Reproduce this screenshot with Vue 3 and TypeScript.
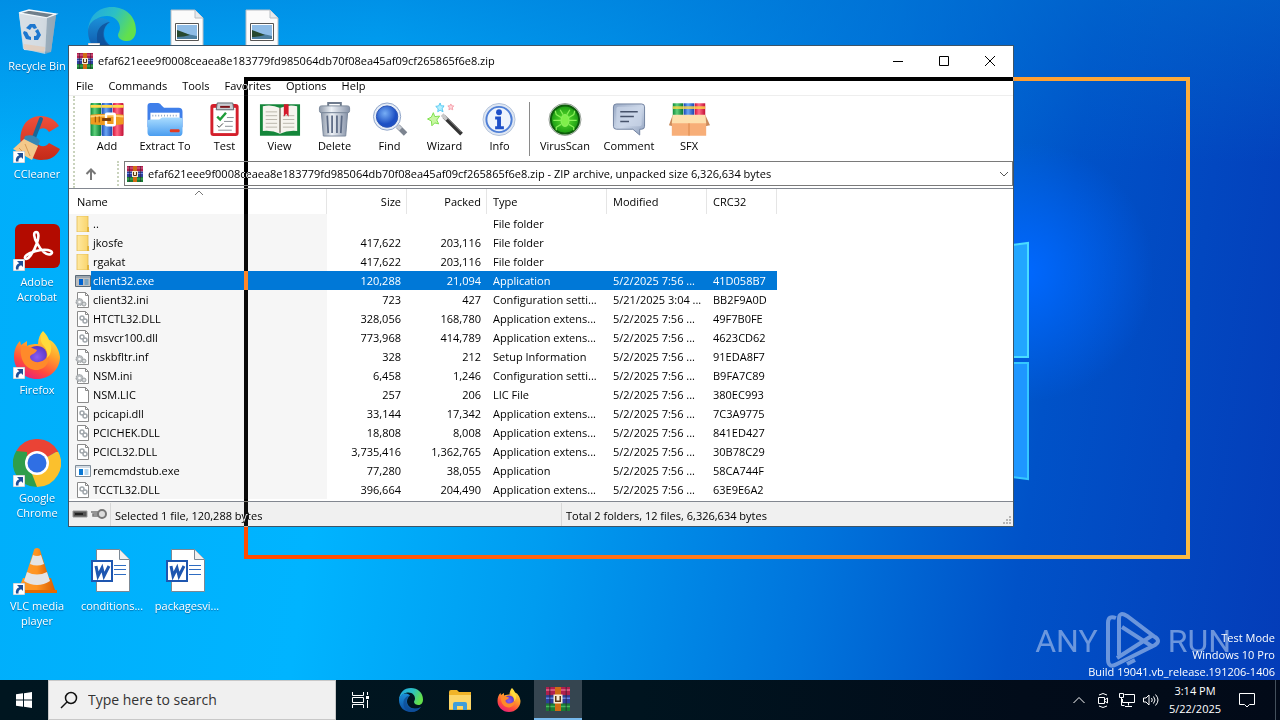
<script setup lang="ts">
interface DesktopItem {
  label: string
  icon: string
  col: number
  row: number
  shortcut?: boolean
}
interface Tool {
  label: string
  icon: string
  size: 'xs' | 'sm' | 'md' | 'lg'
}
interface Entry {
  name: string
  icon: string
  size: string
  packed: string
  type: string
  modified: string
  crc: string
  selected?: boolean
}

const archive = 'efaf621eee9f0008ceaea8e183779fd985064db70f08ea45af09cf265865f6e8.zip'

const desktopItems: DesktopItem[] = [
  { label: 'Recycle Bin', icon: 'bin', col: 1, row: 1 },
  { label: '', icon: 'edge', col: 2, row: 1, shortcut: true },
  { label: '', icon: 'image', col: 3, row: 1 },
  { label: '', icon: 'image', col: 4, row: 1 },
  { label: 'CCleaner', icon: 'ccleaner', col: 1, row: 2, shortcut: true },
  { label: 'Adobe Acrobat', icon: 'acrobat', col: 1, row: 3, shortcut: true },
  { label: 'Firefox', icon: 'firefox', col: 1, row: 4, shortcut: true },
  { label: 'Google Chrome', icon: 'chrome', col: 1, row: 5, shortcut: true },
  { label: 'VLC media player', icon: 'vlc', col: 1, row: 6, shortcut: true },
  { label: 'conditions...', icon: 'word', col: 2, row: 6 },
  { label: 'packagesvi...', icon: 'word', col: 3, row: 6 },
]

const menus = ['File', 'Commands', 'Tools', 'Favorites', 'Options', 'Help']

const mainTools: Tool[] = [
  { label: 'Add', icon: 'add', size: 'xs' },
  { label: 'Extract To', icon: 'extract', size: 'lg' },
  { label: 'Test', icon: 'test', size: 'sm' },
  { label: 'View', icon: 'view', size: 'sm' },
  { label: 'Delete', icon: 'delete', size: 'sm' },
  { label: 'Find', icon: 'find', size: 'sm' },
  { label: 'Wizard', icon: 'wizard', size: 'sm' },
  { label: 'Info', icon: 'info', size: 'sm' },
]
const extraTools: Tool[] = [
  { label: 'VirusScan', icon: 'virus', size: 'lg' },
  { label: 'Comment', icon: 'comment', size: 'lg' },
  { label: 'SFX', icon: 'sfx', size: 'md' },
]

const ext = 'Application extens...'
const conf = 'Configuration setti...'
const day = '5/2/2025 7:56 ...'
const entries: Entry[] = [
  { name: '..', icon: 'folder', size: '', packed: '', type: 'File folder', modified: '', crc: '' },
  { name: 'jkosfe', icon: 'folder', size: '417,622', packed: '203,116', type: 'File folder', modified: '', crc: '' },
  { name: 'rgakat', icon: 'folder', size: '417,622', packed: '203,116', type: 'File folder', modified: '', crc: '' },
  { name: 'client32.exe', icon: 'exe', size: '120,288', packed: '21,094', type: 'Application', modified: day, crc: '41D058B7', selected: true },
  { name: 'client32.ini', icon: 'ini', size: '723', packed: '427', type: conf, modified: '5/21/2025 3:04 ...', crc: 'BB2F9A0D' },
  { name: 'HTCTL32.DLL', icon: 'dll', size: '328,056', packed: '168,780', type: ext, modified: day, crc: '49F7B0FE' },
  { name: 'msvcr100.dll', icon: 'dll', size: '773,968', packed: '414,789', type: ext, modified: day, crc: '4623CD62' },
  { name: 'nskbfltr.inf', icon: 'ini', size: '328', packed: '212', type: 'Setup Information', modified: day, crc: '91EDA8F7' },
  { name: 'NSM.ini', icon: 'ini', size: '6,458', packed: '1,246', type: conf, modified: day, crc: 'B9FA7C89' },
  { name: 'NSM.LIC', icon: 'file', size: '257', packed: '206', type: 'LIC File', modified: day, crc: '380EC993' },
  { name: 'pcicapi.dll', icon: 'dll', size: '33,144', packed: '17,342', type: ext, modified: day, crc: '7C3A9775' },
  { name: 'PCICHEK.DLL', icon: 'dll', size: '18,808', packed: '8,008', type: ext, modified: day, crc: '841ED427' },
  { name: 'PCICL32.DLL', icon: 'dll', size: '3,735,416', packed: '1,362,765', type: ext, modified: day, crc: '30B78C29' },
  { name: 'remcmdstub.exe', icon: 'exe', size: '77,280', packed: '38,055', type: 'Application', modified: day, crc: '58CA744F' },
  { name: 'TCCTL32.DLL', icon: 'dll', size: '396,664', packed: '204,490', type: ext, modified: day, crc: '63E9E6A2' },
]
</script>

<template>
  <div class="screen">
    <svg class="sprite" aria-hidden="true">
      <defs>
        <linearGradient id="gGreen" x1="0" x2="1"><stop offset="0" stop-color="#0c8a3c" /><stop offset=".4" stop-color="#5fd07a" /><stop offset="1" stop-color="#07752f" /></linearGradient>
        <linearGradient id="gBlue" x1="0" x2="1"><stop offset="0" stop-color="#1a49b8" /><stop offset=".4" stop-color="#6aa6f4" /><stop offset="1" stop-color="#1a45ad" /></linearGradient>
        <linearGradient id="gRed" x1="0" x2="1"><stop offset="0" stop-color="#d4143c" /><stop offset=".4" stop-color="#ff6a86" /><stop offset="1" stop-color="#c20f35" /></linearGradient>
        <linearGradient id="gFolder" x1="0" y1="0" x2="0" y2="1"><stop offset="0" stop-color="#a9dcff" /><stop offset="1" stop-color="#4a9df0" /></linearGradient>
        <linearGradient id="gSteel" x1="0" x2="1"><stop offset="0" stop-color="#8f9aaa" /><stop offset=".4" stop-color="#eef2f7" /><stop offset="1" stop-color="#8793a8" /></linearGradient>
        <linearGradient id="gBubble" x1="0" y1="0" x2="1" y2="1"><stop offset="0" stop-color="#98a8c4" /><stop offset=".5" stop-color="#ced9ea" /><stop offset="1" stop-color="#8fa0bd" /></linearGradient>
        <radialGradient id="gLens" cx=".4" cy=".35"><stop offset="0" stop-color="#77aef5" /><stop offset="1" stop-color="#1d50c4" /></radialGradient>
        <radialGradient id="gVirus"><stop offset="0" stop-color="#5fe62e" /><stop offset="1" stop-color="#1a9a12" /></radialGradient>
        <linearGradient id="gEdgeA" x1="0" y1="0" x2="1" y2=".4"><stop offset="0" stop-color="#1fa6e4" /><stop offset=".55" stop-color="#2cc0c4" /><stop offset="1" stop-color="#62e04c" /></linearGradient>
        <linearGradient id="gEdgeB" x1="0" y1="0" x2="0" y2="1"><stop offset="0" stop-color="#1b8fd8" /><stop offset="1" stop-color="#0c4da2" /></linearGradient>
        <linearGradient id="gFox" x1=".8" y1="0" x2=".3" y2="1"><stop offset="0" stop-color="#fff04a" /><stop offset=".4" stop-color="#ffa42b" /><stop offset=".75" stop-color="#ff4a3e" /><stop offset="1" stop-color="#e8207a" /></linearGradient>
        <radialGradient id="gFoxBall"><stop offset="0" stop-color="#8a5cf0" /><stop offset="1" stop-color="#5a38c8" /></radialGradient>
        <linearGradient id="gCone" x1="0" x2="1"><stop offset="0" stop-color="#ff9a2a" /><stop offset=".5" stop-color="#ff9420" /><stop offset="1" stop-color="#d85c00" /></linearGradient>
        <linearGradient id="gBin" x1="0" x2="1"><stop offset="0" stop-color="#e4e9ee" /><stop offset=".6" stop-color="#c9d3dc" /><stop offset="1" stop-color="#93a5b5" /></linearGradient>
        <linearGradient id="gYellow" x1="0" x2="1"><stop offset="0" stop-color="#ffe9a2" /><stop offset="1" stop-color="#f9d367" /></linearGradient>
        <linearGradient id="gCc" x1="0" y1="0" x2="0" y2="1"><stop offset="0" stop-color="#f0503a" /><stop offset="1" stop-color="#c42a18" /></linearGradient>
      </defs>

      <symbol id="bin" viewBox="0 0 48 48">
        <path d="M6 7 43 8 38 45 11 43Z" fill="url(#gBin)" />
        <path d="M6 6 16 3 43 7 34 11Z" fill="#6f7f8b" stroke="#f3f7fa" stroke-width="1.4" />
        <path d="M34 11 43 8 38 45 32 47Z" fill="#94a7b7" opacity=".8" />
        <path d="M6 7 34 11 32 47 10 42Z" fill="#d6dde4" opacity=".8" />
        <path d="M11 37 32 40 31 46 11 42Z" fill="#e7c6ac" opacity=".6" />
        <path d="m13 21 4-4h5l2 4-3 1-2-2-2 3Zm12 1 3 6-3 5h-4l0-4 2 0 1-2-2-3Zm-7 11-5-1-3-6 1-2 3 1 2 4 2 1Z" fill="#1d77cf" />
      </symbol>
      <symbol id="edge" viewBox="0 0 48 48">
        <path d="M24 0C10 0 1 9 0 24c4-11 11-15 19-15 8 0 13 6 13 12 0 3-2 5-2 7 0 4 5 6 9 6 6 0 9-5 9-11C48 9 37 0 24 0Z" fill="url(#gEdgeA)" />
        <path d="M0 24c0 14 10 24 24 24 9 0 16-4 20-10-4 2-8 3-12 3-10 0-16-7-16-14 0-5 2-9 6-12-3-3-6-4-9-4C6 11 0 17 0 24Z" fill="url(#gEdgeB)" />
        <path d="M22 15c-8 4-9 17-2 23 7 7 18 5 24 0-4 6-11 10-20 10C13 46 8 38 9 29c0-7 5-13 13-14Z" fill="#0f4c94" opacity=".75" />
      </symbol>
      <symbol id="image" viewBox="0 0 48 48">
        <path d="M8 3h24l8 8v36H8Z" fill="#fbfbfb" stroke="#b9bec4" />
        <path d="M32 3v8h8" fill="#e6e9ec" stroke="#b9bec4" />
        <path d="M12.500 16.500h23v17h-23Z" fill="#fff" stroke="#555" />
        <path d="M14 18h20v14H14Z" fill="#8fbce6" />
        <path d="M14 25q7 1 20 4v3H14Z" fill="#4d7fa0" />
        <path d="M14 23q6 2 13 5-6 2-13 2Z" fill="#27482f" />
      </symbol>
      <symbol id="ccleaner" viewBox="0 0 48 48">
        <path d="M46 11C39-1 19-3 11 10 3 24 8 44 28 45c9 0 15-3 19-11l-11-6c-3 4-7 4-10 2-6-4-4-13 1-16 4-2 7 0 9 3Z" fill="url(#gCc)" />
        <path d="M28 4 19 28" stroke="#1a6796" stroke-width="4" stroke-linecap="round" />
        <path d="M12 21q9-3 15 5l-3 6-14-5Z" fill="#3687b5" />
        <path d="M11 24 25 31 19 45 0 34Z" fill="#f3c98b" />
        <path d="m6 33 5 5m1-9 5 12" stroke="#d79b56" />
      </symbol>
      <symbol id="acrobat" viewBox="0 0 48 48">
        <rect x="2" y="1" width="45" height="44" rx="6" fill="#b30b00" />
        <path d="M23 9c-3 0-2 6 1 11 4 8 10 13 14 11 3-2-1-5-10-4-8 1-17 5-16 8 2 4 9-6 12-15 2-6 2-11-1-11Z" fill="none" stroke="#fff" stroke-width="2.600" />
      </symbol>
      <symbol id="firefox" viewBox="0 0 48 48">
        <path d="M30 0c3 3 5 6 6 9 3 0 10 7 11 17 0 12-10 22-23 22S1 38 1 26c0-7 2-12 6-16l1 4 6-4 0 5c4-2 9-2 11-2 0-5 2-10 5-13Z" fill="url(#gFox)" />
        <circle cx="24" cy="26" r="11" fill="url(#gFoxBall)" />
        <path d="M8 15c6-1 10 2 16 4-1 4-7 4-7 7 1 5 8 7 14 3 3-2 4-6 1-10 6 4 6 17-7 20C14 40 6 30 8 15Z" fill="#ff8a2a" />
        <path d="M30 1c-3 5-3 10 1 14 3 4 4 8 3 12 5-4 6-13 1-19-3-3-4-5-5-7Z" fill="#ffdb3c" />
      </symbol>
      <symbol id="chrome" viewBox="0 0 48 48">
        <path d="M24 24 3.200 12A24 24 0 0 1 44.800 12Z" fill="#ea4335" />
        <path d="M24 24 44.800 12A24 24 0 0 1 24 48Z" fill="#fbc02d" />
        <path d="M24 24V48A24 24 0 0 1 3.200 12Z" fill="#2f9e4b" />
        <path d="M24 13H45.300L44.800 12 24 8Z" fill="#ea4335" />
        <path d="M14.500 29.500 3.200 12 14 13Z" fill="#2f9e4b" />
        <path d="M33.500 29.500 24 48l-5-13Z" fill="#fbc02d" />
        <circle cx="24" cy="24" r="12" fill="#fff" />
        <circle cx="24" cy="24" r="9.500" fill="#2f6fe4" />
      </symbol>
      <symbol id="vlc" viewBox="0 0 48 48">
        <path d="M10 31h28l5 15H4Z" fill="url(#gCone)" />
        <path d="M3 43h41v3H3Z" fill="#e66a00" />
        <path d="M24 1c2 0 3 1 3 2l10 31q-6 4-13 4t-13-4L21 3c0-1 1-2 3-2Z" fill="url(#gCone)" />
        <path d="m20 8-3 9q7 3 14 0l-3-9q-4 2-8 0Z" fill="#e4e4e4" />
        <path d="m14 25-3 9q6 4 13 4t13-4l-3-9q-10 5-20 0Z" fill="#e4e4e4" />
      </symbol>
      <symbol id="word" viewBox="2 0 48 48">
        <path d="M10.500 2.500h23l10 10v32h-33Z" fill="#fff" stroke="#7b8894" />
        <path d="M33.500 2.500v10h10" fill="#f0f0f0" stroke="#7b8894" />
        <path d="M28 18.500h12M28 22.500h12M28 27.500h12" stroke="#2e6cc2" />
        <rect x="6" y="14" width="20" height="20" fill="#fff" stroke="#1e56b0" stroke-width="2" />
        <path d="m10 19 2 10 4-8 2 8 5-10" fill="none" stroke="#1e56b0" stroke-width="3" />
      </symbol>
      <symbol id="shortcut" viewBox="0 0 12 12">
        <path d="M0 0h12v12H0Z" fill="#fff" stroke="#a9b3bd" />
        <path d="M4 2h6v6L8.200 6.200Q5 7 5.500 10.500H3Q2 6 6.200 4.200Z" fill="#1f4f96" />
      </symbol>

      <symbol id="books" viewBox="0 0 16 16">
        <path d="M0 0h16v5.500H0Z" fill="#b0204e" /><path d="M0 5.500h16V11H0Z" fill="#2c3f9c" /><path d="M0 11h16v5H0Z" fill="#1a7a34" />
        <path d="M0 1.500h16v1H0Z" fill="#e0688e" /><path d="M0 7h16v1H0Z" fill="#6a86e0" /><path d="M0 12.500h16v1H0Z" fill="#4ab860" />
        <path d="M2 0h1v16H2Zm11 0h1v16h-1Z" fill="#2a1c30" opacity=".5" />
        <path d="M6 0h4v16H6Z" fill="#d06c14" /><path d="M5 5h6v6H5Z" fill="#f8ecd4" /><path d="M6.500 6v3.500h3V6" fill="none" stroke="#5b3410" />
      </symbol>
      <symbol id="add" viewBox="0 0 36 36">
        <rect x="1" y="1" width="11" height="34" rx="1" fill="url(#gGreen)" /><rect x="12.500" y="1" width="11" height="34" rx="1" fill="url(#gBlue)" /><rect x="24" y="1" width="11" height="34" rx="1" fill="url(#gRed)" />
        <path d="M1 3h11v3H1Zm11.500 0h11v3h-11ZM24 3h11v3H24Z" fill="#ffd84a" />
        <path d="M1 13q17-2 34 0v10q-17 2-34 0Z" fill="#ef9a1e" /><path d="M1 14q17-2 34 0v2q-17-2-34 0Z" fill="#ffd27a" />
        <rect x="17" y="12" width="9" height="12" rx="1" fill="none" stroke="#fff" stroke-width="2.500" /><path d="M13 18h9" stroke="#7b3b06" stroke-width="3" />
        <path d="M6 15v6m4-6v6" stroke="#8d4a05" />
      </symbol>
      <symbol id="extract" viewBox="0 0 36 36">
        <path d="M0 4q0-3 3-3h8q2 0 4 3l2 2h15q4 0 4 4v16H0Z" fill="#3f7fea" />
        <path d="M3 11h30v10H3Z" fill="#fff" /><path d="M5 14h27" stroke="#8fa6c4" stroke-width="2" stroke-dasharray="1 2" />
        <path d="M0 20q0-2 3-2h9l3-2h17q4 0 4 2v13q0 4-4 4H4q-4 0-4-4Z" fill="url(#gFolder)" />
        <rect x="23" y="28" width="10" height="3" rx="1" fill="#e23a22" />
      </symbol>
      <symbol id="test" viewBox="0 0 36 36">
        <rect x="3" y="2" width="29" height="33" rx="3" fill="#d41f2b" /><path d="M6 6h23v26H6Z" fill="#fff" />
        <path d="M10 1h16l1 7H9Z" fill="#c9cdd2" stroke="#5f666d" /><path d="M13 5h10" stroke="#7a1218" stroke-width="2" />
        <path d="m10 15 3 3 6-7" fill="none" stroke="#1f9c3a" stroke-width="2.500" /><path d="m10 24 2 2 4-4" fill="none" stroke="#444" />
        <path d="M20 16h7M17 20h9M18 25h8M11 29h14" stroke="#8a9097" />
      </symbol>
      <symbol id="view" viewBox="0 0 44 36">
        <path d="M1 2h42v33H1Z" fill="#14863a" /><path d="M4 4q10-2 18 2 8-4 18-2v26q-10-1-18 3-8-4-18-3Z" fill="#f6f4ee" />
        <path d="M22 6v26" stroke="#9a9488" stroke-width="2" /><path d="M7 10h12M7 14h12M7 18h12M7 22h12M7 26h12M25 14h12M25 18h12M25 22h12M25 26h12" stroke="#b9b4aa" />
        <path d="M26 2h5v13l-2.500-3L26 15Z" fill="#d3182a" />
      </symbol>
      <symbol id="delete" viewBox="0 0 36 36">
        <path d="M11 4V1h13v3" fill="none" stroke="#6f7b8d" stroke-width="2" /><rect x="2" y="4" width="31" height="7" rx="2" fill="url(#gSteel)" stroke="#7d899b" />
        <path d="M4 11h27l-2 24H6Z" fill="url(#gSteel)" stroke="#7b889c" /><path d="m10 14 1 18m4-18v18m5-18v18m5-18-1 18" stroke="#5c6a84" stroke-width="1.800" />
      </symbol>
      <symbol id="find" viewBox="0 0 36 36">
        <path d="m26 25 8 8" stroke="#7c8490" stroke-width="5" /><path d="m25 24 4 4" stroke="#c7ccd4" stroke-width="4" />
        <circle cx="15" cy="15" r="14" fill="#e6edf7" stroke="#8ea4c8" /><circle cx="15" cy="15" r="11" fill="url(#gLens)" stroke="#2a54b4" />
      </symbol>
      <symbol id="wizard" viewBox="0 0 36 36">
        <path d="m17 15 18 18" stroke="#333" stroke-width="4" /><path d="m15 13 5 5" stroke="#c9c9c9" stroke-width="4" /><path d="m20 16 15 15" stroke="#8b8b8b" />
        <path d="m6 11 1.500 4 5-.5-3 4 2 4-4-1-3 3-.5-5-4-2 4-2Z" fill="#c9f7a4" stroke="#7fe04e" />
        <path d="m13 1 1 3h3l-2 3 1 3-3-1.500-2.500 1.500 .5-3-2.500-2.500 3-.5Z" fill="#b4f0ff" stroke="#57c8f2" /><path d="m24 2 1 2h2l-1.500 2 .5 2-2-1-2 1 .5-2L21 4h2Z" fill="#ffd7dc" stroke="#f5a0aa" />
      </symbol>
      <symbol id="info" viewBox="0 0 36 36">
        <circle cx="17" cy="18" r="16.500" fill="#dfe7f3" stroke="#b3c2da" /><circle cx="17" cy="18" r="13" fill="#eef4fc" stroke="#4f7fd6" stroke-width="2" />
        <circle cx="17" cy="10.500" r="3" fill="#1e50c8" /><path d="M13 15h6v10h3v3h-9v-3h2v-7h-2Z" fill="#1e50c8" />
      </symbol>
      <symbol id="virus" viewBox="0 0 36 36">
        <circle cx="18" cy="18" r="16.500" fill="#dfe3df" stroke="#9aa39a" /><circle cx="18" cy="18" r="14.500" fill="url(#gVirus)" stroke="#0e5c0c" stroke-width="2" />
        <g fill="none" stroke="#8af05a" stroke-width="1.300"><ellipse cx="18" cy="19" rx="4" ry="6" fill="#7ff04a" /><path d="m14 16-5-3-1-4m6 10H6m8 4-5 3v3m13-13 5-3 1-4m-6 10h8m-8 4 5 3v3M16 13l-3-5m7 5 3-5" /></g>
      </symbol>
      <symbol id="comment" viewBox="0 0 36 36">
        <path d="M5 2h26q3 0 3 3v20q0 3-3 3h-2l0 6-7-6H5q-3 0-3-3V5q0-3 3-3Z" fill="url(#gBubble)" stroke="#71819f" /><rect x="5" y="5" width="26" height="20" rx="2" fill="#cbd6e8" opacity=".7" />
        <path d="M9 10h18M9 15h14M9 20h9" stroke="#47536b" stroke-width="1.600" />
      </symbol>
      <symbol id="sfx" viewBox="0 0 44 36">
        <path d="M5 1h11v14H5Z" fill="url(#gGreen)" /><path d="M16.500 1h11v14h-11Z" fill="url(#gBlue)" /><path d="M28 1h11v14H28Z" fill="url(#gRed)" /><path d="M5 4h34v3H5Z" fill="#ffd84a" opacity=".8" />
        <path d="m5 13-4 11 4 1Zm34 0 5 11-5 1Z" fill="#c98a5a" /><path d="M4 20h36v15H4Z" fill="#f7ae78" /><path d="M5 13h34l1 9H4Z" fill="#fde0ae" /><path d="M22 22v13" stroke="#d98446" />
      </symbol>

      <symbol id="folder" viewBox="0 0 16 16"><path d="M2 0h11v13l1 3H2Z" fill="url(#gYellow)" stroke="#e3bb52" stroke-width=".8" /><path d="M12 11h2v5h-2Z" fill="#e2b53e" /></symbol>
      <symbol id="file" viewBox="0 0 16 16"><path d="M2.500.5h8l3 3v12h-11Z" fill="#fff" stroke="#8a8a8a" /><path d="M10.500.5v3h3" fill="none" stroke="#8a8a8a" /></symbol>
      <symbol id="dll" viewBox="0 0 16 16"><path d="M2.500.5h8l3 3v12h-11Z" fill="#fff" stroke="#8a8a8a" /><path d="M10.500.5v3h3" fill="none" stroke="#8a8a8a" /><circle cx="7" cy="7" r="2" fill="none" stroke="#a0a6ab" stroke-width="1.500" /><circle cx="10" cy="10" r="2" fill="none" stroke="#a0a6ab" stroke-width="1.500" /></symbol>
      <symbol id="ini" viewBox="0 0 16 16"><path d="M2.500.5h8l3 3v12h-11Z" fill="#fff" stroke="#8a8a8a" /><path d="M10.500.5v3h3" fill="none" stroke="#8a8a8a" /><circle cx="4.500" cy="10" r="3.500" fill="#b9bdc0" stroke="#9a9ea1" stroke-dasharray="2 1" /><circle cx="4.500" cy="10" r="1.300" fill="#fff" /><circle cx="9" cy="12" r="2" fill="#d5d8da" stroke="#9a9ea1" /></symbol>
      <symbol id="exe" viewBox="0 0 16 16"><path d="M.5 2.500h15v11H.5Z" fill="#fff" stroke="#7f8c99" /><path d="M1 3h14v2H1Z" fill="#d3dbe3" /><path d="M4 6h4v6H4Z" fill="#0a78d4" /><path d="M9.500 7h4m-4 2h4m-4 2h4" stroke="#6aaede" /></symbol>
      <symbol id="explorer" viewBox="0 0 24 24"><path d="M1 4q0-2 2-2h6l2 2h12v18H1Z" fill="#f0b429" /><path d="M1 7h22v14H1Z" fill="#fcd669" /><path d="M5 22v-6q0-2 2-2h10q2 0 2 2v6h-4v-4H9v4Z" fill="#3f9ddb" /></symbol>
    </svg>

    <main class="desktop">
      <svg class="wall-logo" viewBox="0 0 260 240" aria-hidden="true">
        <path d="M120 18 248 2V116H120Z" fill="#22a6ff" stroke="#4adcff" stroke-width="2" />
        <path d="M120 122H248V238L120 222Z" fill="#1e97ff" stroke="#35c8ff" stroke-width="2" />
      </svg>
      <nav class="icons" aria-label="Desktop">
        <button
          v-for="(item, i) in desktopItems"
          :key="i"
          class="shortcut"
          type="button"
          :aria-label="item.label || item.icon"
          :style="{ gridColumn: item.col, gridRow: item.row }"
        >
          <span class="art">
            <svg class="big"><use :href="'#' + item.icon" /></svg>
            <svg v-if="item.shortcut" class="arrow"><use href="#shortcut" /></svg>
          </span>
          <span v-if="item.label" class="caption">{{ item.label }}</span>
        </button>
      </nav>

      <section class="window">
        <header class="titlebar">
          <svg class="i16"><use href="#books" /></svg>
          <h1>{{ archive }}</h1>
          <button type="button" aria-label="Minimize"><svg viewBox="0 0 12 12"><path d="M1 6.500h10" /></svg></button>
          <button type="button" aria-label="Maximize"><svg viewBox="0 0 12 12"><path d="M1.500 1.500h9v9h-9Z" /></svg></button>
          <button type="button" aria-label="Close"><svg viewBox="0 0 12 12"><path d="m1 1 10 10M11 1 1 11" /></svg></button>
        </header>
        <nav class="menubar">
          <button v-for="m in menus" :key="m" type="button">{{ m }}</button>
        </nav>
        <div class="bars">
          <div class="toolbar">
            <button v-for="t in mainTools" :key="t.label" type="button" :class="['tool', t.size]">
              <svg><use :href="'#' + t.icon" /></svg>
              <span>{{ t.label }}</span>
            </button>
            <span class="divider"></span>
            <button v-for="t in extraTools" :key="t.label" type="button" :class="['tool', t.size]">
              <svg><use :href="'#' + t.icon" /></svg>
              <span>{{ t.label }}</span>
            </button>
          </div>
          <div class="address">
            <button class="up" type="button" aria-label="Up one level">
              <svg viewBox="0 0 12 12"><path d="M6 12V1.500M1.500 6 6 1.500 10.500 6" /></svg>
            </button>
            <button class="path" type="button">
              <svg class="i16"><use href="#books" /></svg>
              <span>{{ archive }} - ZIP archive, unpacked size 6,326,634 bytes</span>
              <svg class="chev" viewBox="0 0 10 10"><path d="m1 3 4 4 4-4" /></svg>
            </button>
          </div>
        </div>
        <div class="list">
          <table>
            <colgroup>
              <col class="c-name" /><col class="c-num" /><col class="c-num" /><col class="c-type" /><col class="c-mod" /><col class="c-crc" />
            </colgroup>
            <thead>
              <tr>
                <th class="name">
                  Name
                  <svg class="sort" viewBox="0 0 10 6"><path d="m1 5 4-4 4 4" /></svg>
                </th>
                <th class="num">Size</th>
                <th class="num">Packed</th>
                <th>Type</th>
                <th>Modified</th>
                <th>CRC32</th>
              </tr>
            </thead>
            <tbody>
              <tr v-for="e in entries" :key="e.name" :class="{ selected: e.selected }">
                <td class="name">
                  <div class="cell">
                    <svg class="i16"><use :href="'#' + e.icon" /></svg>
                    <span>{{ e.name }}</span>
                  </div>
                </td>
                <td class="num">{{ e.size }}</td>
                <td class="num">{{ e.packed }}</td>
                <td>{{ e.type }}</td>
                <td>{{ e.modified }}</td>
                <td>{{ e.crc }}</td>
              </tr>
            </tbody>
          </table>
        </div>
        <footer class="status">
          <span class="lights">
            <svg viewBox="0 0 36 12">
              <path d="M1 3h14v6H1Z" fill="#555" stroke="#999" /><path d="M3 6h8" stroke="#222" stroke-width="2" />
              <path d="M19 4h8v2h-6v2h6" fill="none" stroke="#777" stroke-width="1.500" /><circle cx="30" cy="6" r="4" fill="#ddd" stroke="#777" stroke-width="2" />
            </svg>
          </span>
          <span class="part">Selected 1 file, 120,288 bytes</span>
          <span class="part total">Total 2 folders, 12 files, 6,326,634 bytes</span>
          <svg class="grip" viewBox="0 0 9 9"><path d="M6 0h2v2H6ZM3 3h2v2H3Zm3 0h2v2H6ZM0 6h2v2H0Zm3 0h2v2H3Zm3 0h2v2H6Z" /></svg>
        </footer>
      </section>

      <div class="drag-frame"></div>

      <div class="brand" aria-hidden="true">
        <span>ANY</span>
        <svg viewBox="0 0 56 60">
          <path d="M11 7Q3 4 3 12v36q0 10 9 5L50 34q6-4 0-8L22 5q-8-5-8 3v36" />
          <path d="M17 16 48 36M12 47 48 24M22 53 30 49" />
        </svg>
        <span>RUN</span>
      </div>
      <p class="build">
        Test Mode<br />Windows 10 Pro<br />Build 19041.vb_release.191206-1406
      </p>
    </main>

    <footer class="taskbar">
      <button class="start" type="button" aria-label="Start">
        <svg viewBox="0 0 16 16"><path d="M0 2.300 7 1.300V7.500H0ZM8 1.200 16 0V7.500H8ZM0 8.500H7V14.700L0 13.700ZM8 8.500H16V16L8 14.800Z" fill="#fff" /></svg>
      </button>
      <label class="search">
        <svg viewBox="0 0 18 18"><circle cx="11" cy="7" r="5.500" /><path d="M7 11 1 17" /></svg>
        <input type="text" aria-label="Search" placeholder="Type here to search" />
      </label>
      <button class="task view" type="button" aria-label="Task View">
        <svg class="line" viewBox="0 0 18 18"><path d="M1.500 1v3.500h11V1M1.500 17v-3.500h11V17M1.500 6.500h11v5h-11ZM16.500 1v3M16.500 9v8" /><path d="M15 5h3v3h-3Z" fill="#fff" stroke="none" /></svg>
      </button>
      <button class="task" type="button" aria-label="Edge"><svg><use href="#edge" /></svg></button>
      <button class="task" type="button" aria-label="File Explorer"><svg><use href="#explorer" /></svg></button>
      <button class="task" type="button" aria-label="Firefox"><svg><use href="#firefox" /></svg></button>
      <button class="task active" type="button" aria-label="WinRAR"><svg><use href="#books" /></svg></button>
      <div class="tray">
        <button type="button" aria-label="Show hidden icons"><svg viewBox="0 0 16 16"><path d="m2.500 11 5.500-5.500L13.500 11" /></svg></button>
        <button type="button" aria-label="Meet Now"><svg viewBox="0 0 16 16"><path d="M3.500 5.500h6v6h-6ZM9.500 8l3-2v5l-3-2M4 3q4-3 8 0M4 14q4 3 8 0" /></svg></button>
        <button type="button" aria-label="Network"><svg viewBox="0 0 16 16"><path d="M5.500 2.500h10v8H3.500V7M9.500 10.500v3M6 14.500h7M.5 1.500h4v4h-4ZM2.500 5.500v8h3" /></svg></button>
        <button type="button" aria-label="Volume"><svg viewBox="0 0 16 16"><path d="M.5 6v4h2.500l3 3V3L3 6ZM8.500 6q1.500 2 0 4M10.500 4.500q3 3.500 0 7M12.500 2.500q5 5.500 0 11" /></svg></button>
        <time class="clock"><span>3:14 PM</span><span>5/22/2025</span></time>
        <button class="notes" type="button" aria-label="Notifications"><svg viewBox="0 0 18 18"><path d="M1.500 2.500h15v11h-5l-2.500 2.500-2.500-2.500h-5Z" /></svg></button>
        <span class="peek"></span>
      </div>
    </footer>
  </div>
</template>

<style>
body {
  margin: 0;
}
</style>

<style scoped>
* {
  box-sizing: border-box;
}
.screen {
  min-height: 100vh;
  display: flex;
  flex-direction: column;
  font: 11px/16px 'Open Sans', 'Noto Sans', sans-serif;
  color: #000;
}
button {
  font: inherit;
  color: inherit;
  background: none;
  border: 0;
  padding: 0;
  white-space: nowrap;
}
svg {
  display: block;
  flex: none;
}
.sprite {
  position: absolute;
  width: 0;
  height: 0;
}
.desktop {
  position: relative;
  flex: 1;
  isolation: isolate;
  overflow: hidden;
  background:
    radial-gradient(circle 130px at 80% 40%, #0068ff, #0068ff00),
    linear-gradient(180deg, #0070d080 0, #0070d000 24%),
    linear-gradient(98deg, #00aefa 0, #00b4ff 28%, #009cf0 45%, #0074dc 65%, #0052c8 80%, #043cb8 100%);
}
.wall-logo {
  position: absolute;
  left: 780px;
  top: 241px;
  width: 260px;
  height: 240px;
}
.icons {
  display: grid;
  grid-template-columns: repeat(4, 75px);
  grid-template-rows: repeat(6, 108px);
}
.shortcut {
  display: flex;
  flex-direction: column;
  align-items: center;
  gap: 3px;
  width: 74px;
  padding: 7px 6px 0;
  color: #fff;
  line-height: 15px;
  text-shadow: 0 1px 1px #0036;
}
.art {
  display: grid;
}
.art > svg {
  grid-area: 1 / 1;
}
.big {
  width: 48px;
  height: 48px;
}
.arrow {
  width: 12px;
  height: 12px;
  align-self: end;
}
.caption {
  white-space: normal;
}

.window {
  position: absolute;
  left: 68px;
  top: 45px;
  width: 946px;
  background: #fff;
  border: 1px solid #3c5468;
}
.i16 {
  width: 16px;
  height: 16px;
}
.titlebar {
  display: flex;
  align-items: center;
  height: 30px;
  padding-left: 8px;
}
.titlebar h1 {
  flex: 1;
  margin: 0 0 0 5px;
  font-size: 11px;
  font-weight: 400;
}
.titlebar button {
  width: 46px;
  height: 30px;
  display: grid;
  place-items: center;
}
.titlebar button svg {
  width: 12px;
  height: 12px;
  fill: none;
  stroke: #000;
}
.menubar {
  display: flex;
  gap: 15px;
  height: 20px;
  padding-left: 7px;
  border-bottom: 1px solid #eee;
}
.bars {
  margin-left: 4px;
  border-left: 2px dotted #c9d3bd;
}
.toolbar {
  display: flex;
  height: 65px;
  padding: 6px 0 0 6px;
}
.tool {
  display: flex;
  flex-direction: column;
  align-items: center;
  gap: 1px;
}
.tool svg {
  width: 42px;
  height: 35px;
}
.xs {
  width: 52px;
}
.sm {
  width: 55px;
}
.md {
  width: 56px;
}
.lg {
  width: 64px;
}
.divider {
  width: 1px;
  height: 54px;
  margin: 0 3px 0 2px;
  background: #8a8a8a;
}
.address {
  display: flex;
  height: 27px;
  padding-bottom: 2px;
}
.up {
  width: 44px;
  padding-left: 10px;
  border-right: 2px dotted #c9d3bd;
}
.up svg {
  width: 12px;
  height: 12px;
  fill: none;
  stroke: #777;
  stroke-width: 2;
}
.path {
  flex: 1;
  display: flex;
  align-items: center;
  gap: 5px;
  margin-left: 5px;
  padding: 0 3px 0 2px;
  border: 1px solid #7a7a7a;
  text-align: left;
}
.path span {
  flex: 1;
}
.chev {
  width: 10px;
  height: 10px;
  fill: none;
  stroke: #555;
}
.list {
  border-top: 1px solid #828790;
  border-bottom: 1px solid #828790;
  padding-bottom: 2px;
}
table {
  width: 708px;
  table-layout: fixed;
  border-collapse: separate;
  border-spacing: 0;
}
.c-name {
  width: 258px;
}
.c-num {
  width: 80px;
}
.c-type {
  width: 120px;
}
.c-mod {
  width: 100px;
}
.c-crc {
  width: 70px;
}
th,
td {
  padding: 0 0 0 6px;
  text-align: left;
  font-weight: 400;
  white-space: nowrap;
}
th {
  height: 25px;
  border-right: 1px solid #e5e5e5;
}
td {
  height: 19px;
}
th.name {
  position: relative;
  padding-left: 8px;
}
.num {
  padding: 0 6px 0 0;
  text-align: right;
}
th.num {
  padding-right: 5px;
}
.sort {
  position: absolute;
  left: 125px;
  top: 1px;
  width: 10px;
  height: 6px;
  fill: none;
  stroke: #777;
}
td.name {
  padding: 0 0 0 6px;
  background: #f6f6f6;
}
.cell {
  display: flex;
  align-items: center;
}
.cell span {
  flex: 1;
  line-height: 19px;
  padding-left: 2px;
}
.selected td:not(.name),
.selected .cell span {
  background: #0078d7;
  color: #fff;
}
.selected .i16 {
  filter: brightness(0.75) saturate(1.6);
}
.status {
  display: flex;
  align-items: center;
  height: 24px;
  background: #f0f0f0;
}
.lights {
  width: 41px;
  padding-left: 3px;
}
.lights svg {
  width: 36px;
  height: 12px;
}
.part {
  width: 451px;
  padding: 3px 4px 0;
  border-left: 1px solid #d8d8d8;
  line-height: 20px;
}
.total {
  flex: 1;
}
.grip {
  width: 9px;
  height: 9px;
  align-self: end;
  margin: 0 1px 1px;
  fill: #b5b5b5;
}

/* Outline shown while the window is being dragged: inverts what lies below it */
.drag-frame {
  position: absolute;
  left: 244px;
  top: 77px;
  width: 946px;
  height: 482px;
  border: 4px solid #fff;
  mix-blend-mode: difference;
}
.brand {
  position: absolute;
  right: 49px;
  bottom: 9px;
  display: flex;
  align-items: center;
  gap: 7px;
  color: #8fb0e6;
  opacity: 0.75;
  font: 32px/60px Roboto, sans-serif;
}
.brand svg {
  width: 56px;
  height: 60px;
  fill: none;
  stroke: #8fb0e6;
  stroke-width: 4;
}
.build {
  position: absolute;
  right: 5px;
  bottom: 0;
  margin: 0;
  color: #fff;
  line-height: 17px;
  text-align: right;
}

.taskbar {
  display: flex;
  height: 40px;
  background: linear-gradient(90deg, #001620, #00141f 50%, #020c1a 80%, #020a18);
}
.start {
  width: 48px;
  display: grid;
  place-items: center;
}
.start svg {
  width: 16px;
  height: 16px;
}
.search {
  display: flex;
  align-items: center;
  gap: 10px;
  width: 288px;
  padding-left: 11px;
  background: #f0f0f0;
  border: 1px solid #c8c8c8;
}
.search svg {
  width: 18px;
  height: 18px;
  fill: none;
  stroke: #111;
  stroke-width: 1.5;
}
.search input {
  flex: 1;
  min-width: 0;
  padding: 0;
  border: 0;
  outline: 0;
  background: none;
  font: 14px/20px 'Open Sans', 'Noto Sans', sans-serif;
}
.search input::placeholder {
  color: #333;
  opacity: 1;
}
.task {
  width: 48px;
  margin-right: 1px;
  display: grid;
  place-items: center;
}
.task.view {
  margin-right: 3px;
}
.task svg {
  width: 24px;
  height: 24px;
}
.task .line {
  width: 18px;
  height: 18px;
  fill: none;
  stroke: #fff;
}
.task.active {
  background: #354550;
  border-bottom: 2px solid #76b9ed;
}
.tray {
  display: flex;
  align-items: center;
  margin-left: auto;
  color: #fff;
}
.tray button {
  width: 24px;
  height: 40px;
  display: grid;
  place-items: center;
}
.tray svg {
  width: 16px;
  height: 16px;
  fill: none;
  stroke: #fff;
}
.clock {
  display: flex;
  flex-direction: column;
  align-items: center;
  width: 64px;
  line-height: 18px;
}
.tray .notes {
  width: 40px;
}
.notes svg {
  width: 18px;
  height: 18px;
}
.peek {
  width: 5px;
  height: 40px;
  margin-left: 8px;
  border-left: 1px solid #44505c;
}
</style>
